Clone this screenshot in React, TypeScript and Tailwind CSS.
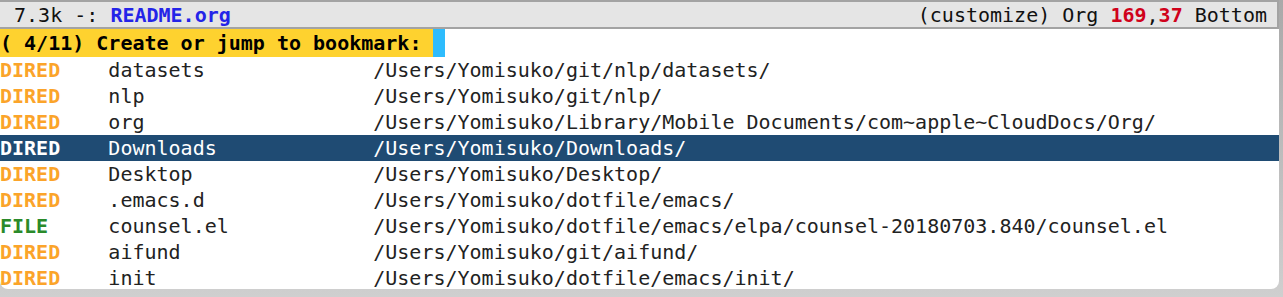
import React from 'react';

const rows = [
  { kind: 'DIRED', name: 'datasets', path: '/Users/Yomisuko/git/nlp/datasets/' },
  { kind: 'DIRED', name: 'nlp', path: '/Users/Yomisuko/git/nlp/' },
  { kind: 'DIRED', name: 'org', path: '/Users/Yomisuko/Library/Mobile Documents/com~apple~CloudDocs/Org/' },
  { kind: 'DIRED', name: 'Downloads', path: '/Users/Yomisuko/Downloads/', active: true },
  { kind: 'DIRED', name: 'Desktop', path: '/Users/Yomisuko/Desktop/' },
  { kind: 'DIRED', name: '.emacs.d', path: '/Users/Yomisuko/dotfile/emacs/' },
  { kind: 'FILE', name: 'counsel.el', path: '/Users/Yomisuko/dotfile/emacs/elpa/counsel-20180703.840/counsel.el' },
  { kind: 'DIRED', name: 'aifund', path: '/Users/Yomisuko/git/aifund/' },
  { kind: 'DIRED', name: 'init', path: '/Users/Yomisuko/dotfile/emacs/init/' },
];

export default function App() {
  return (
    <div
      className="w-[1283px] h-[297px] bg-gradient-to-b from-[#a9a9a9] to-[#cfcfcf] overflow-hidden text-[20px] whitespace-pre"
      style={{ fontFamily: '"DejaVu Sans Mono", "Liberation Mono", monospace' }}
    >
      <div className="w-[1279px] h-[289px] bg-white rounded-b-[8px] flex flex-col">
        {/* Mode line */}
        <div className="h-[29px] flex items-center justify-between bg-[#e5e5e5] border-t-2 border-b-2 border-r-2 border-[#a3a3a3] pl-[2px] pr-[10px] text-[#111]">
          <div>
            {' 7.3k -: '}
            <span className="font-bold text-[#2424e8]">README.org</span>
          </div>
          <div>
            {'(customize) Org '}
            <span className="font-bold text-[#d0021b]">169</span>,
            <span className="font-bold text-[#d0021b]">37</span>
            {' Bottom'}
          </div>
        </div>

        {/* Minibuffer prompt */}
        <div className="h-[28px] flex items-center">
          <span className="h-full flex items-center bg-[#fed22f] font-bold text-black">
            {'( 4/11) Create or jump to bookmark: '}
          </span>
          <span className="h-full w-[12px] bg-[#2ebcfd]" />
        </div>

        {/* Candidates */}
        {rows.map(r => (
          <div
            key={r.name}
            className={`h-[26px] flex items-center leading-[26px] ${r.active ? 'bg-[#1f4b73] text-white' : 'text-[#222]'}`}
          >
            <span
              className={`w-[9ch] font-bold ${r.active ? 'text-white' : r.kind === 'FILE' ? 'text-[#2a8a2a]' : 'text-[#fba42a]'}`}
            >
              {r.kind}
            </span>
            <span className="w-[22ch]">{r.name}</span>
            <span>{r.path}</span>
          </div>
        ))}
      </div>
    </div>
  );
}
